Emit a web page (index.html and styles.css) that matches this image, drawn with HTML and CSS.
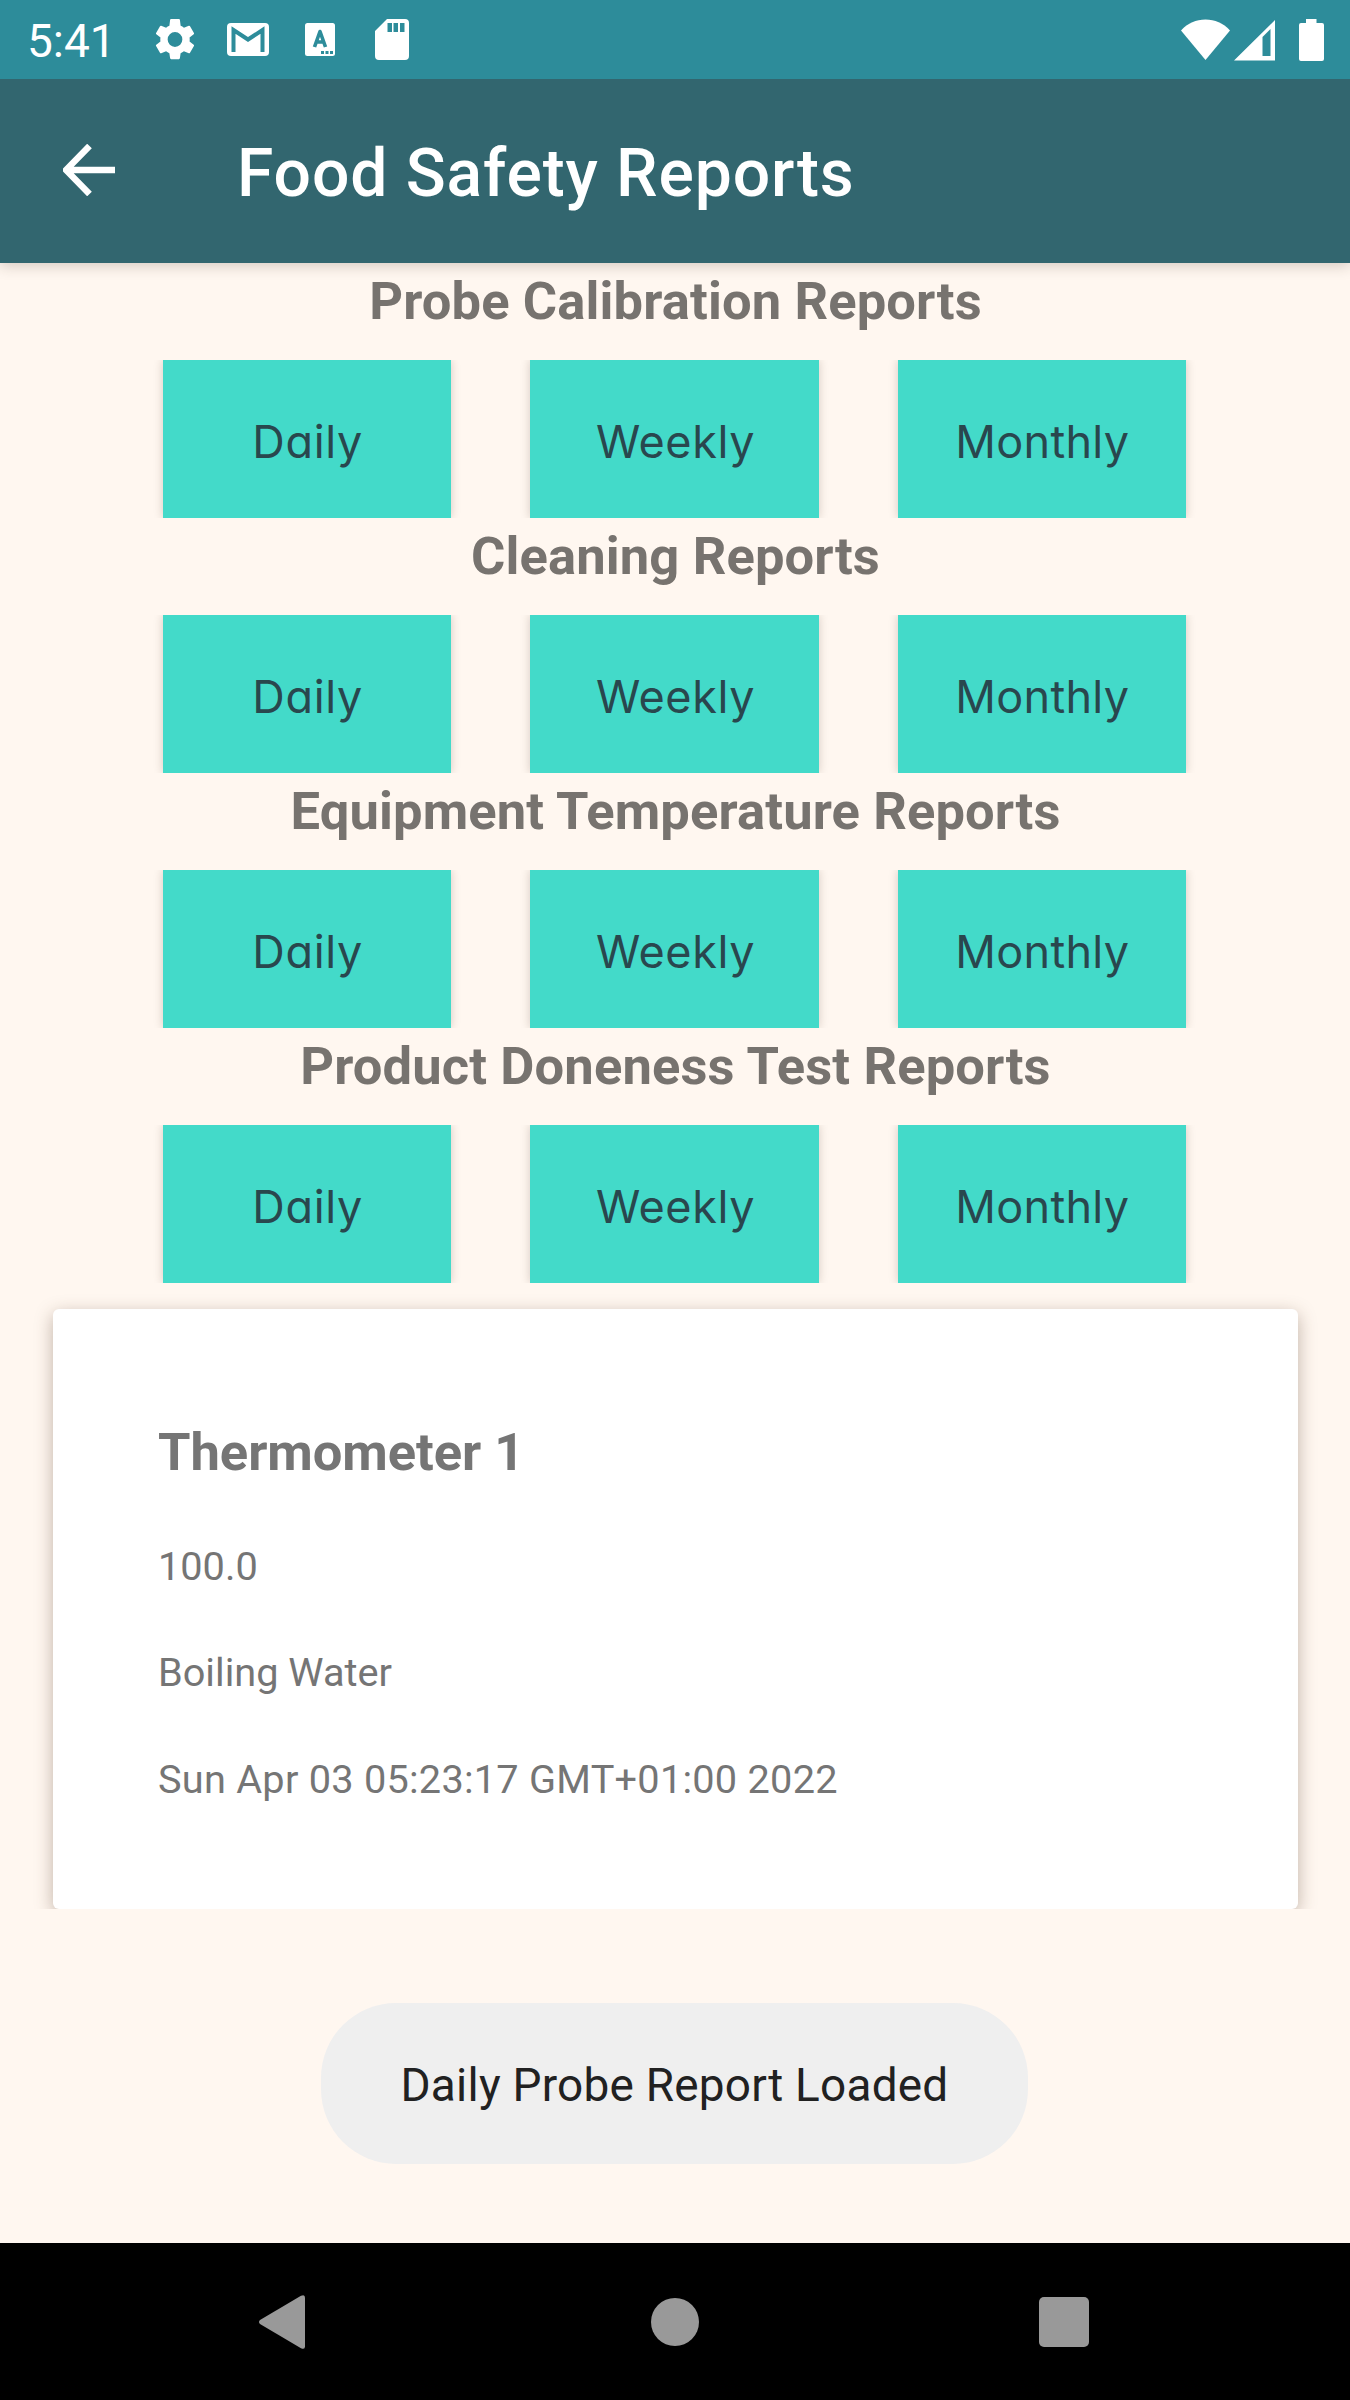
FILE: index.html
```html
<!DOCTYPE html>
<html lang="en">
<head>
<meta charset="utf-8">
<title>Food Safety Reports</title>
<link rel="stylesheet" href="styles.css">
</head>
<body>
<div class="screen">
  <div class="status-bar">
    <span class="clock">5:41</span>
    <div class="notifications">
      <svg class="gear" width="40" height="41" viewBox="2.2 2 19.6 20" preserveAspectRatio="none"><path fill="#fff" d="M19.14 12.94c.04-.3.06-.61.06-.94 0-.32-.02-.64-.07-.94l2.03-1.58a.49.49 0 0 0 .12-.61l-1.92-3.32a.488.488 0 0 0-.59-.22l-2.39.96c-.5-.38-1.03-.7-1.62-.94L14.4 2.41a.484.484 0 0 0-.48-.41h-3.84a.48.48 0 0 0-.47.41L9.25 5.35c-.59.24-1.13.57-1.62.94l-2.39-.96a.48.48 0 0 0-.59.22L2.74 8.87c-.12.21-.08.47.12.61l2.03 1.58c-.05.3-.09.63-.09.94s.02.64.07.94l-2.03 1.58a.49.49 0 0 0-.12.61l1.92 3.32c.12.22.37.29.59.22l2.39-.96c.5.38 1.03.7 1.62.94l.36 2.54c.05.24.24.41.48.41h3.84c.24 0 .44-.17.47-.41l.36-2.54c.59-.24 1.13-.56 1.62-.94l2.39.96c.22.08.47 0 .59-.22l1.92-3.32a.48.48 0 0 0-.12-.61zM12 15.6A3.6 3.6 0 1 1 12 8.400a3.6 3.600 0 0 1 0 7.200z"/></svg>
      <svg class="mail" width="42" height="33" viewBox="0 0 42 33"><rect width="42" height="33" rx="4" fill="#fff"/><path d="M6.500 29V7L21 16.500 35.500 7v22" fill="none" stroke="#2d8c9a" stroke-width="4"/></svg>
      <svg class="keyboard" width="30" height="33" viewBox="0 0 30 33"><rect width="30" height="33" rx="2.500" fill="#fff"/><path d="M9.500 24 15 8.500 20.500 24M11 19h8" fill="none" stroke="#2d8c9a" stroke-width="3.600" stroke-linejoin="round"/><path d="M16 28h3v3h-3zM20.500 28h3v3h-3zM25 28h3v3h-3z" fill="#2d8c9a"/></svg>
      <svg class="sd" width="34" height="41" viewBox="0 0 34 41"><path fill="#fff" fill-rule="evenodd" d="M12 0h18a4 4 0 0 1 4 4v33a4 4 0 0 1-4 4H4a4 4 0 0 1-4-4V12zM12.500 4v9h4.500V4zM18.500 4v9H23V4zM25 4v9h4.500V4z"/></svg>
    </div>
    <div class="system">
      <svg width="49" height="42" viewBox="0 0 49 42"><path fill="#fff" d="M0 11.500C7 4 15 .5 24.500.5S42 4 49 11.500L24.500 41z"/></svg>
      <svg class="signal" width="41" height="42" viewBox="0 0 41 42"><path fill="#fff" fill-rule="evenodd" d="M0 41.500 41 1v40.500zM28.500 18v19h8V10z"/></svg>
      <svg class="battery" width="25" height="42" viewBox="0 0 25 42"><path fill="#fff" d="M7 0h10.500v4H23a2 2 0 0 1 2 2v34a2 2 0 0 1-2 2H2a2 2 0 0 1-2-2V6a2 2 0 0 1 2-2h5z"/></svg>
    </div>
  </div>
  <header class="app-bar">
    <svg class="back" width="52" height="52" viewBox="0 0 52 52"><path d="M52 26H5M26.500 2 3 26l23.500 24" fill="none" stroke="#fff" stroke-width="6.500"/></svg>
    <h1 class="title">Food Safety Reports</h1>
  </header>
  <main class="content">
    <section class="group">
      <h2 class="heading">Probe Calibration Reports</h2>
      <div class="buttons"><button class="btn daily">Daily</button><button class="btn weekly">Weekly</button><button class="btn monthly">Monthly</button></div>
    </section>
    <section class="group">
      <h2 class="heading">Cleaning Reports</h2>
      <div class="buttons"><button class="btn daily">Daily</button><button class="btn weekly">Weekly</button><button class="btn monthly">Monthly</button></div>
    </section>
    <section class="group">
      <h2 class="heading">Equipment Temperature Reports</h2>
      <div class="buttons"><button class="btn daily">Daily</button><button class="btn weekly">Weekly</button><button class="btn monthly">Monthly</button></div>
    </section>
    <section class="group">
      <h2 class="heading">Product Doneness Test Reports</h2>
      <div class="buttons"><button class="btn daily">Daily</button><button class="btn weekly">Weekly</button><button class="btn monthly">Monthly</button></div>
    </section>
    <div class="list">
      <article class="card">
        <h3 class="name">Thermometer 1</h3>
        <p class="line">100.0</p>
        <p class="line">Boiling Water</p>
        <p class="line date">Sun Apr 03 05:23:17 GMT+01:00 2022</p>
      </article>
    </div>
    <div class="toast"><span>Daily Probe Report Loaded</span></div>
  </main>
  <nav class="nav-bar">
    <svg width="46" height="54" viewBox="0 0 46 54"><path fill="#999" d="M1 25 42 .8q4-2 4 2v48.400q0 4-4 2L1 29q-2-2 0-4z"/></svg>
    <svg class="home" width="48" height="48" viewBox="0 0 48 48"><circle cx="24" cy="24" r="24" fill="#999"/></svg>
    <svg width="50" height="50" viewBox="0 0 50 50"><rect width="50" height="50" rx="5" fill="#999"/></svg>
  </nav>
</div>
</body>
</html>
```
FILE: styles.css
```css
* { box-sizing: border-box; }
body { margin: 0; font-family: Roboto, "Liberation Sans", sans-serif; }
h1, h2, h3, p { margin: 0; }
svg { display: block; flex: none; }

.screen {
  width: 1350px;
  height: 2400px;
  display: flex;
  flex-direction: column;
  background: #fff7f0;
  overflow: hidden;
}

.status-bar {
  flex: none;
  position: relative;
  z-index: 1;
  height: 79px;
  display: flex;
  align-items: center;
  padding: 0 26px 0 27px;
  background: #2d8c9a;
  color: #fff;
}
.clock { width: 128px; font-size: 46px; line-height: 54px; padding-top: 3px; white-space: nowrap; }
.notifications { display: flex; align-items: center; }
.mail { margin-left: 32px; }
.keyboard { margin-left: 36px; }
.sd { margin-left: 40px; }
.system { display: flex; align-items: center; margin-left: auto; }
.signal { margin-left: 4px; }
.battery { margin-left: 24px; }

.app-bar {
  flex: none;
  position: relative;
  height: 184px;
  display: flex;
  align-items: center;
  padding: 0 63px;
  background: #32666f;
  box-shadow: 0 2px 14px rgba(60, 40, 30, .24);
}
.back { margin-top: -3px; }
.title { margin-left: 122px; color: #fff; font-size: 66px; line-height: 80px; font-weight: 540; letter-spacing: .9px; white-space: nowrap; padding-top: 5px; }

.content { flex: 1; display: flex; flex-direction: column; }
.group { flex: none; height: 255px; display: flex; flex-direction: column; }
.heading { height: 97px; padding: 7px 0 0 1px; text-align: center; color: #77736f; font-size: 52.500px; line-height: 62px; font-weight: 700; letter-spacing: .13px; white-space: nowrap; }
.buttons { height: 158px; display: grid; grid-template-columns: repeat(3, 1fr); gap: 79px; padding: 0 164px 0 163px; overflow: hidden; }
.btn {
  border: 0;
  padding: 5px 0 0;
  background: #43dac9;
  color: #29474e;
  font: 430 45px/60px Inter, "Liberation Sans", sans-serif;
  font-feature-settings: "cv11";
  box-shadow: 0 0 9px rgba(70, 45, 30, .22);
}
.daily { letter-spacing: .7px; padding-left: 1px; }
.weekly { letter-spacing: .6px; padding-left: 2px; }
.monthly { letter-spacing: .3px; padding-left: 1px; }

.list { flex: none; height: 626px; padding: 26px 52px 0 53px; overflow: hidden; }
.card {
  height: 600px;
  padding: 112px 105px 0;
  background: #fff;
  border-radius: 6px;
  box-shadow: 0 5px 18px rgba(80, 55, 35, .36);
  color: #757575;
}
.name { font-size: 52.500px; line-height: 62px; font-weight: 700; letter-spacing: -.05px; white-space: nowrap; }
.line { font-size: 39.700px; line-height: 46px; margin-top: 60.300px; white-space: nowrap; }
.name + .line { margin-top: 61px; }
.date { letter-spacing: .25px; }

.toast {
  flex: none;
  align-self: center;
  width: 707px;
  height: 161px;
  margin: 94px 1px 0 0;
  border-radius: 75px;
  display: flex;
  align-items: center;
  justify-content: center;
  padding-top: 3px;
  background: #efefef;
  color: #212121;
  font-size: 45.900px;
  line-height: 54px;
  letter-spacing: .25px;
  white-space: nowrap;
}

.nav-bar {
  flex: none;
  height: 157px;
  display: flex;
  align-items: center;
  justify-content: space-between;
  padding: 0 261px 0 259px;
  background: #000;
}
.home { margin-left: 6px; }
```
